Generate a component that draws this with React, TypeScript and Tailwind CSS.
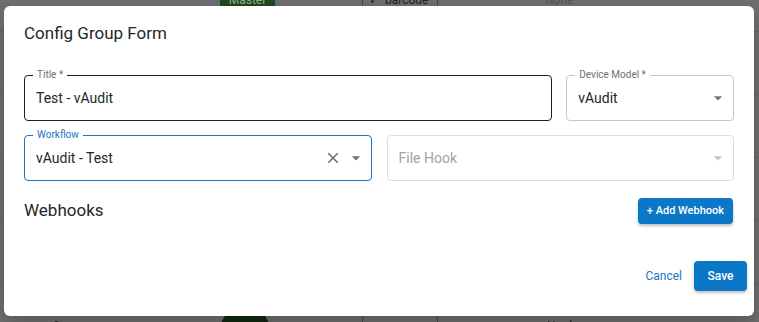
import React from "react";

const ArrowDown = ({ color = "#757575" }: { color?: string }) => (
  <svg width="20" height="20" viewBox="0 0 24 24" fill={color}>
    <path d="M7 10l5 5 5-5z" />
  </svg>
);

const CloseIcon = () => (
  <svg width="18" height="18" viewBox="0 0 24 24" fill="#6b6b6b">
    <path d="M19 6.41 17.59 5 12 10.59 6.41 5 5 6.41 10.59 12 5 17.59 6.41 19 12 13.41 17.59 19 19 17.59 13.41 12z" />
  </svg>
);

function Field({
  label,
  value,
  placeholder,
  borderClass,
  labelClass,
  className,
  clear,
  arrowColor,
}: {
  label?: string;
  value?: string;
  placeholder?: string;
  borderClass: string;
  labelClass?: string;
  className?: string;
  clear?: boolean;
  arrowColor?: string;
}) {
  return (
    <div className={`relative h-[46px] rounded-[4px] border flex items-center pl-[11px] pr-[5px] ${borderClass} ${className ?? ""}`}>
      {label && (
        <span className={`absolute -top-[7px] left-[8px] bg-white px-[4px] text-[10px] leading-[12px] ${labelClass ?? "text-[#6f6f6f]"}`}>
          {label}
        </span>
      )}
      <span className={`flex-1 text-[14px] ${value ? "text-[#262626]" : "text-[#a3a3a3]"}`}>
        {value ?? placeholder}
      </span>
      {clear && (
        <span className="mr-[4px] flex items-center">
          <CloseIcon />
        </span>
      )}
      {arrowColor !== undefined && <ArrowDown color={arrowColor} />}
    </div>
  );
}

function BgRow({ children, first }: { children?: React.ReactNode; first?: boolean }) {
  return (
    <div className={`relative h-[63px] border-b border-[#656565] flex items-center ${first ? "-mt-[31px]" : ""}`}>
      {children}
    </div>
  );
}

export default function App() {
  return (
    <div
      className="relative w-[759px] h-[322px] overflow-hidden bg-[#707070]"
      style={{ fontFamily: "Roboto, 'Liberation Sans', sans-serif" }}
    >
      {/* dimmed background page */}
      <div className="flex flex-col">
        <BgRow first>
          <div className="ml-[220px] w-[55px] h-[20px] rounded-[3px] bg-[#1f4a20] text-[#9ab09a] text-[12px] flex items-center justify-center">
            Master
          </div>
          <div className="ml-[87px] w-[76px] h-[24px] rounded-[4px] border border-[#4a4a4a] flex items-center pl-[6px] gap-[6px] text-[12px] text-[#222]">
            <span>✓</span>
            <span>barcode</span>
          </div>
          <div className="ml-[107px] text-[12px] text-[#555]">None</div>
        </BgRow>
        <BgRow />
        <BgRow />
        <BgRow />
        <BgRow />
        <BgRow>
          <div className="ml-[53px] w-[40px] text-[12px] text-[#222] self-start mt-[33px]">0 Pages</div>
          <div className="ml-[127px] w-[50px] h-[50px] rounded-full bg-[#12290f] self-start mt-[22px]" />
          <div className="ml-[92px] w-[76px] h-[30px] rounded-[4px] border border-[#4a4a4a] self-start mt-[30px]" />
          <div className="ml-[109px] text-[12px] text-[#222] self-start mt-[33px]">Hook</div>
        </BgRow>
      </div>

      {/* dialog overlay */}
      <div className="absolute left-[4px] top-[6px] w-[750px] h-[310px] rounded-[6px] bg-white shadow-[0_8px_24px_rgba(0,0,0,0.25)] flex flex-col">
        <div className="pl-[20px] pt-[16px] h-[52px] text-[17px] text-[#262626] leading-[22px]">
          Config Group Form
        </div>
        <div className="px-[20px] pt-[17px] flex flex-col gap-[14px]">
          <div className="flex gap-[14px]">
            <Field
              className="w-[529px]"
              label="Title *"
              value="Test - vAudit"
              borderClass="border-[#1f1f1f]"
            />
            <Field
              className="w-[168px]"
              label="Device Model *"
              value="vAudit"
              borderClass="border-[#c6c6c6]"
              arrowColor="#757575"
            />
          </div>
          <div className="flex gap-[15px]">
            <Field
              className="w-[348px]"
              label="Workflow"
              labelClass="text-[#1976c8]"
              value="vAudit - Test"
              borderClass="border-[#1976c8]"
              clear
              arrowColor="#757575"
            />
            <Field
              className="w-[348px]"
              placeholder="File Hook"
              borderClass="border-[#dcdcdc]"
              arrowColor="#c4c4c4"
            />
          </div>
          <div className="flex items-center justify-between pr-[1px] h-[26px] mt-[3px]">
            <span className="text-[17px] text-[#262626]">Webhooks</span>
            <button className="h-[26px] px-[9px] rounded-[4px] bg-[#0b77c7] text-white text-[11px] font-medium shadow-[0_2px_3px_rgba(0,0,0,0.25)]">
              + Add Webhook
            </button>
          </div>
        </div>
        <div className="mt-auto mb-[25px] pr-[7px] flex items-center justify-end gap-[8px]">
          <button className="text-[12px] text-[#1976c8] px-[4px]">Cancel</button>
          <button className="h-[30px] w-[53px] rounded-[4px] bg-[#0b77c7] text-white text-[12px] font-medium shadow-[0_2px_3px_rgba(0,0,0,0.25)]">
            Save
          </button>
        </div>
      </div>
    </div>
  );
}
